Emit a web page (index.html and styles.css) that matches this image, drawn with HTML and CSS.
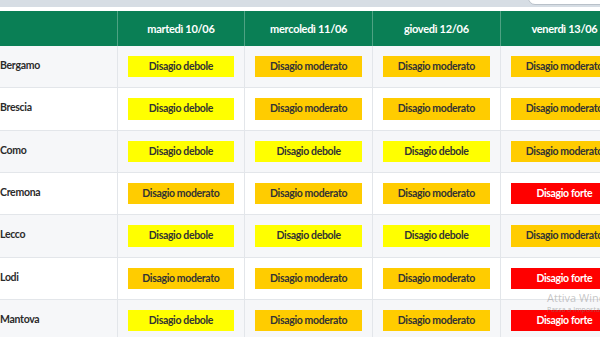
FILE: index.html
```html
<!DOCTYPE html>
<html lang="it">
<head>
<meta charset="utf-8">
<link rel="stylesheet" href="styles.css">
</head>
<body>
<div class="topbar"><div class="search"></div></div>
<div class="gap"></div>
<table class="grid">
  <colgroup>
    <col class="c-city"><col class="c-day"><col class="c-day"><col class="c-day"><col class="c-day">
  </colgroup>
  <thead>
    <tr><th></th><th>martedì 10/06</th><th>mercoledì 11/06</th><th>giovedì 12/06</th><th>venerdì 13/06</th></tr>
  </thead>
  <tbody>
    <tr><td class="city">Bergamo</td><td><div class="b deb">Disagio debole</div></td><td><div class="b mod">Disagio moderato</div></td><td><div class="b mod">Disagio moderato</div></td><td><div class="b mod">Disagio moderato</div></td></tr>
    <tr><td class="city">Brescia</td><td><div class="b deb">Disagio debole</div></td><td><div class="b mod">Disagio moderato</div></td><td><div class="b mod">Disagio moderato</div></td><td><div class="b mod">Disagio moderato</div></td></tr>
    <tr><td class="city">Como</td><td><div class="b deb">Disagio debole</div></td><td><div class="b deb">Disagio debole</div></td><td><div class="b deb">Disagio debole</div></td><td><div class="b mod">Disagio moderato</div></td></tr>
    <tr><td class="city">Cremona</td><td><div class="b mod">Disagio moderato</div></td><td><div class="b mod">Disagio moderato</div></td><td><div class="b mod">Disagio moderato</div></td><td><div class="b for">Disagio forte</div></td></tr>
    <tr><td class="city">Lecco</td><td><div class="b deb">Disagio debole</div></td><td><div class="b deb">Disagio debole</div></td><td><div class="b deb">Disagio debole</div></td><td><div class="b mod">Disagio moderato</div></td></tr>
    <tr><td class="city">Lodi</td><td><div class="b mod">Disagio moderato</div></td><td><div class="b mod">Disagio moderato</div></td><td><div class="b mod">Disagio moderato</div></td><td><div class="b for">Disagio forte</div></td></tr>
    <tr><td class="city">Mantova</td><td><div class="b deb">Disagio debole</div></td><td><div class="b mod">Disagio moderato</div></td><td><div class="b mod">Disagio moderato</div></td><td><div class="b for">Disagio forte</div></td></tr>
  </tbody>
</table>
<div class="watermark">
  <div class="wm1">Attiva Windows</div>
  <div class="wm2">Passa a Impostazioni per attivare Windows.</div>
</div>
</body>
</html>
```
FILE: styles.css
```css
html, body {
  margin: 0;
  padding: 0;
  background: #fff;
  overflow: hidden;
  width: 600px;
  height: 337px;
  position: relative;
  font-family: Lato, sans-serif;
}
.topbar {
  height: 7px;
  background: #d6dde4;
  display: flex;
  justify-content: flex-end;
  overflow: visible;
}
.search {
  width: 80px;
  height: 12px;
  margin-top: -9px;
  margin-right: -10px;
  background: #fff;
  border: 1px solid #b9c1c9;
  border-radius: 7px;
}
.gap {
  height: 4px;
}
.grid {
  border-collapse: collapse;
  table-layout: fixed;
  width: 628px;
}
.c-city { width: 117px; }
.c-day { width: 127.75px; }
thead th {
  background: #0a7f55;
  color: #fff;
  font-weight: 700;
  font-size: 11px;
  letter-spacing: -0.3px;
  height: 35px;
  padding: 0 4px;
  text-align: center;
  border-left: 1px solid #4ea283;
}
thead th:first-child { border-left: none; }
tbody td {
  padding: 10px 10px;
  border-bottom: 1px solid #e3e6ea;
  border-left: 1px solid #e3e6ea;
  vertical-align: top;
}
tbody tr:nth-child(odd) td { background: #f6f7f9; }
tbody td.city {
  border-left: none;
  padding: 10px 0 0 0;
  font-weight: 700;
  font-size: 10.5px;
  letter-spacing: -0.3px;
  line-height: 18px;
  color: #2b2b2b;
}
.b {
  height: 21.33px;
  line-height: 21.33px;
  text-align: center;
  font-size: 10.5px;
  letter-spacing: -0.35px;
  color: #333;
  font-weight: 700;
}
.deb { background: #ffff00; }
.mod { background: #ffcc00; }
.for { background: #ff0000; color: #fff; }
.watermark {
  position: absolute;
  left: 547px;
  top: 290px;
  white-space: nowrap;
  font-family: "Open Sans", sans-serif;
  color: rgba(150, 150, 150, 0.55);
}
.wm1 { font-size: 11px; line-height: 15px; }
.wm2 { font-size: 7px; line-height: 10px; color: rgba(120, 120, 120, 0.5); }
```
